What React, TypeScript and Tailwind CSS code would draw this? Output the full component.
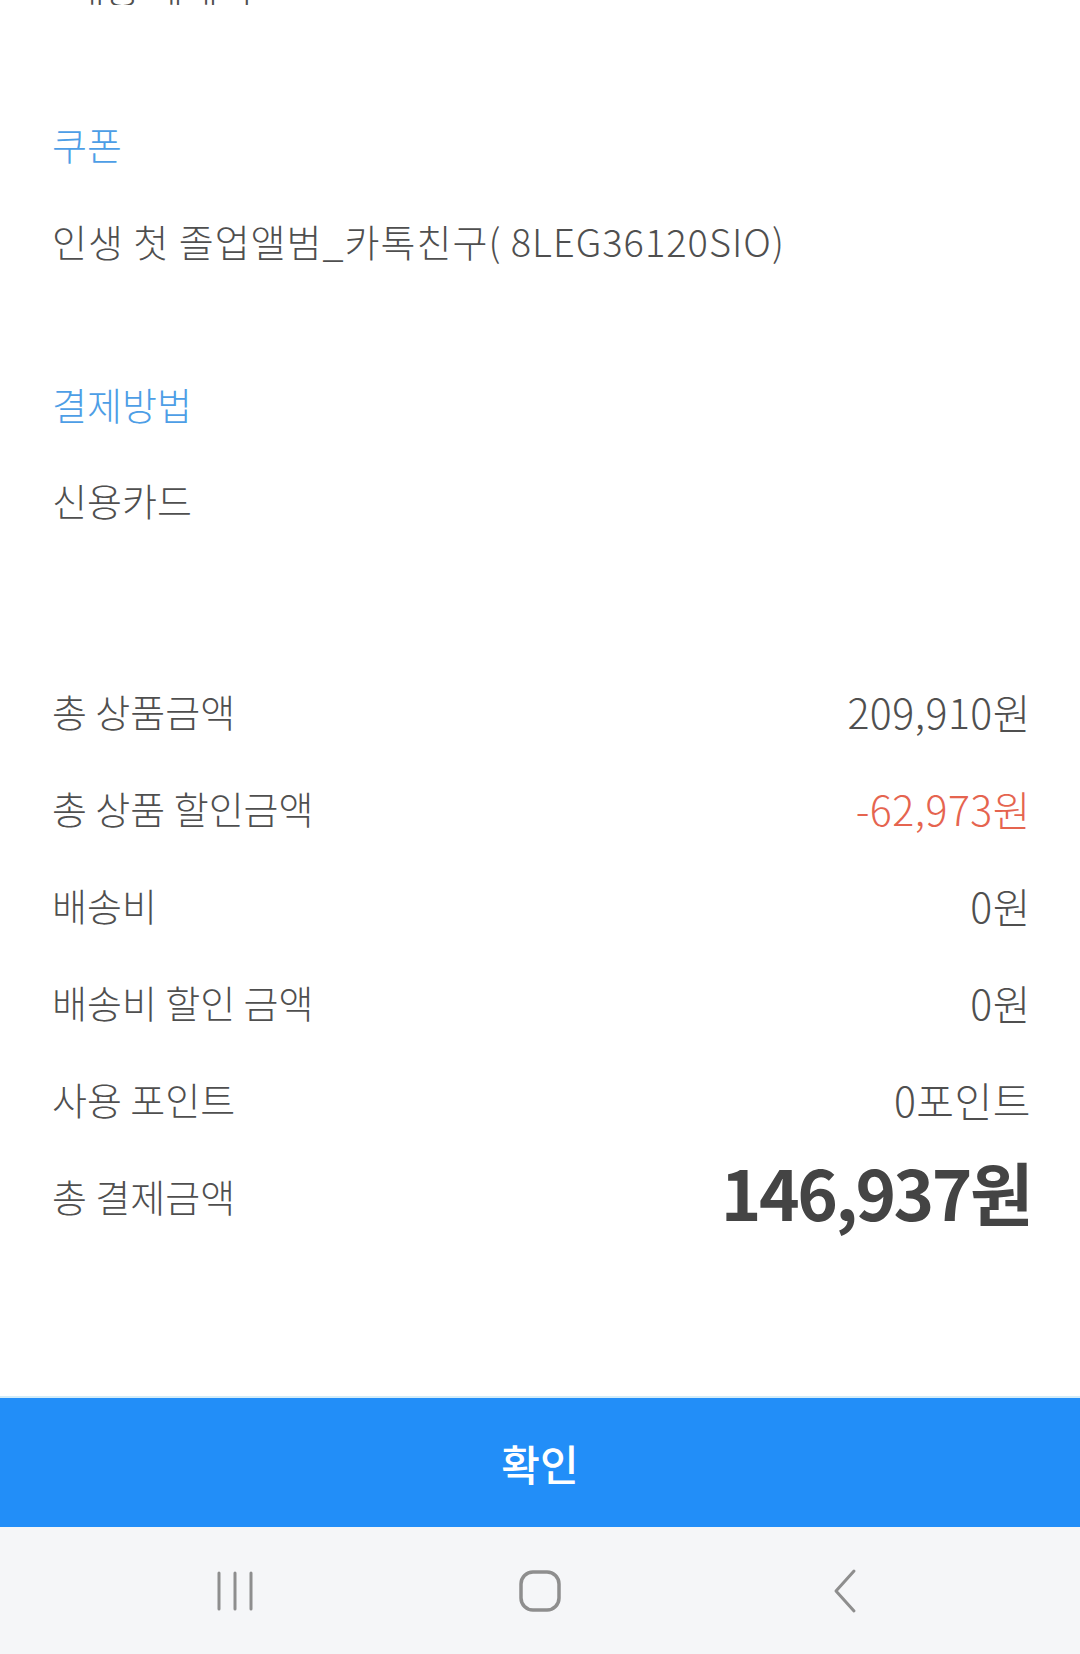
import React from "react";

const FONT = { fontFamily: '"Noto Sans CJK KR", "Noto Sans", sans-serif' };

function Row({ label, value, valueClass }: { label: string; value: string; valueClass?: string }) {
  return (
    <div className="flex h-[97px] items-center justify-between">
      <span className="text-[38px] leading-[48px] font-light text-[#4f4f4f]">{label}</span>
      <span className={"text-[41px] leading-[48px] font-light tracking-[0.5px] " + (valueClass ?? "text-[#4f4f4f]")}>{value}</span>
    </div>
  );
}

export default function App() {
  return (
    <div className="flex h-[1654px] w-[1080px] flex-col bg-white" style={FONT}>
      <div className="flex-1 pl-[52px] pr-[49px]">
        <div className="flex h-[5px] items-end overflow-hidden">
          <span className="text-[38px] leading-[48px] font-light text-[#4f4f4f] -mb-[6px] pl-[18px]">배송 메세지</span>
        </div>
        <div className="mt-[115px] text-[38px] leading-[48px] font-light text-[#4d9ee6]">쿠폰</div>
        <div className="mt-[49px] text-[38px] leading-[48px] font-light tracking-[1px] text-[#4f4f4f]">
          인생 첫 졸업앨범_카톡친구( 8LEG36120SIO)
        </div>
        <div className="mt-[115px] text-[38px] leading-[48px] font-light text-[#4d9ee6]">결제방법</div>
        <div className="mt-[48px] text-[38px] leading-[48px] font-light text-[#4f4f4f]">신용카드</div>
        <div className="mt-[138px]">
          <Row label="총 상품금액" value="209,910원" />
          <Row label="총 상품 할인금액" value="-62,973원" valueClass="text-[#e5644f]" />
          <Row label="배송비" value="0원" />
          <Row label="배송비 할인 금액" value="0원" />
          <Row label="사용 포인트" value="0포인트" />
          <div className="flex h-[97px] items-center justify-between">
            <span className="text-[38px] leading-[48px] font-light text-[#4f4f4f]">총 결제금액</span>
            <span className="-mt-[10px] text-[69px] leading-[80px] font-bold tracking-[-2.5px] text-[#444444]">146,937원</span>
          </div>
        </div>
      </div>
      <div className="h-[2px] bg-[#d3ecf8]" />
      <button className="flex h-[129px] w-full items-center justify-center bg-[#228ef8] text-[42px] font-medium text-white">
        확인
      </button>
      <div className="grid h-[127px] grid-cols-3 items-center bg-[#f5f6f8] px-[83px]">
        <div className="flex justify-center">
          <svg width="40" height="44" viewBox="0 0 40 44">
            <line x1="4" y1="4" x2="4" y2="40" stroke="#8e8e8e" strokeWidth="3" strokeLinecap="round" />
            <line x1="20" y1="4" x2="20" y2="40" stroke="#8e8e8e" strokeWidth="3" strokeLinecap="round" />
            <line x1="36" y1="4" x2="36" y2="40" stroke="#8e8e8e" strokeWidth="3" strokeLinecap="round" />
          </svg>
        </div>
        <div className="flex justify-center">
          <svg width="44" height="44" viewBox="0 0 44 44">
            <rect x="3" y="3" width="38" height="38" rx="12" fill="none" stroke="#8e8e8e" strokeWidth="3.5" />
          </svg>
        </div>
        <div className="flex justify-center">
          <svg width="30" height="46" viewBox="0 0 30 46">
            <polyline points="24,3 6,23 24,43" fill="none" stroke="#8e8e8e" strokeWidth="3" strokeLinecap="round" strokeLinejoin="round" />
          </svg>
        </div>
      </div>
    </div>
  );
}
